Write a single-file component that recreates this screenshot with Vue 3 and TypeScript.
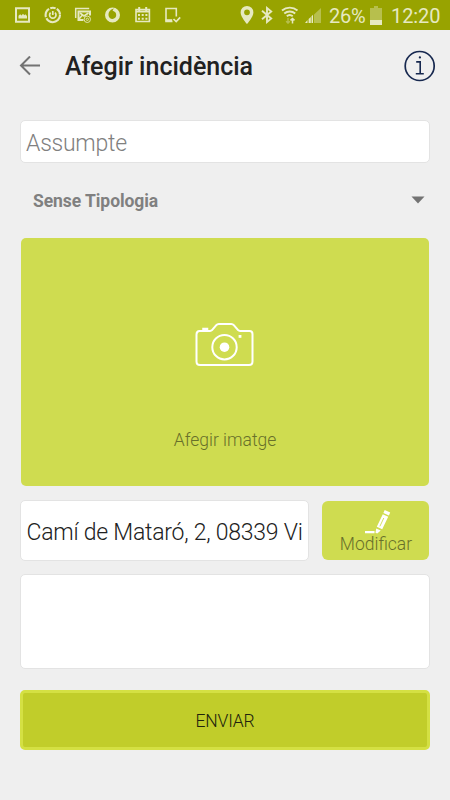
<script setup lang="ts">
import { ref } from 'vue'

const subject = ref('')
const address = ref('Camí de Mataró, 2, 08339 Vi')
const description = ref('')
const category = ref('Sense Tipologia')
const battery = '26%'
const clock = '12:20'
</script>

<template>
  <main class="screen">
    <header class="status">
      <div class="notices">
        <svg viewBox="0 0 18 18"><path d="M2 2.200h13v13.600H2z" fill="none" stroke="currentColor" stroke-width="2" /><path d="M4.500 12.500V9.800l1.700-1.600 1.300 1.300L9 7.700l1.300 1.500 1-1 1.700 1.800v2.500z" fill="currentColor" /></svg>
        <svg viewBox="0 0 18 18" fill="none" stroke="currentColor"><circle cx="8.800" cy="9" r="7.200" stroke-width="2.100" stroke-dasharray="19 1.300 9.500 1.300 5.500 1.300 6.600 1.300" /><path d="M6.600 6.700A3.200 3.200 0 1 0 11 6.700" stroke-width="1.700" /><path d="M8.800 5v4" stroke-width="1.700" /></svg>
        <svg viewBox="0 0 18 18" fill="none" stroke="currentColor"><path d="M1.700 12V2.500h13.500" stroke-width="1.500" /><path d="M9.500 14H4.500V5.500h11.500V9.500" stroke-width="2" /><path d="m6 7 4 3 4.500-3M5 13l3-3.500" stroke-width="1.600" /><circle cx="13.300" cy="13.300" r="3.200" stroke-width=".9" /><circle cx="13.300" cy="13.300" r="1.200" stroke-width=".8" /></svg>
        <svg viewBox="0 0 18 18"><path fill-rule="evenodd" d="M8.500 1.500a7.500 7.500 0 1 0 0 15 7.500 7.500 0 0 0 0-15Zm2 .9c-1.200.4-1.800 1.300-1.800 2.400 2.300.7 3.500 2.200 3.500 4.200a3.700 3.700 0 0 1-3.700 3.900 4 4 0 0 1-4-4.200c0-3 2.300-6 6-6.300Z" fill="currentColor" /></svg>
        <svg viewBox="0 0 18 18"><path d="M2 3.500h13.400v12H2z" fill="none" stroke="currentColor" stroke-width="1.600" /><path d="M2 5.500h13M5.200 1v4M12.200 1v4" stroke="currentColor" stroke-width="2" /><path d="M4 8h2v2H4zm3.700 0h2v2h-2zm3.700 0h2v2h-2zM4 11.700h2v2H4zm3.700 0h2v2h-2zm3.700 0h2v2h-2z" fill="currentColor" /></svg>
        <svg viewBox="0 0 18 18" fill="none" stroke="currentColor"><path d="M12.300 10.500v-8H2v13h6.500" stroke-width="1.600" /><path d="M1.500 14.200h6.700" stroke-width="2" /><path d="m9.500 13 2.700 2.600 4-4.200" stroke-width="1.700" /></svg>
      </div>
      <svg class="pin" viewBox="0 0 14 18"><path fill-rule="evenodd" d="M7 0a6.400 6.400 0 0 0-6.400 6.400C.6 10.700 7 18 7 18s6.400-7.300 6.400-11.600A6.400 6.400 0 0 0 7 0Zm0 3.400a2.900 2.900 0 1 1 0 5.800 2.900 2.900 0 0 1 0-5.800Z" fill="currentColor" /></svg>
      <svg class="bluetooth" viewBox="0 0 12 18"><path d="m1 4.800 9.200 7.700L6 16V2l4.200 3.500L1 13.200" fill="none" stroke="currentColor" stroke-width="1.900" /></svg>
      <svg class="wifi" viewBox="0 0 18 18" fill="none" stroke="currentColor"><path d="M1 4.500a12 12 0 0 1 15.500 0M3.300 7.500a8.200 8.200 0 0 1 10.900 0M5.800 10.300a4.500 4.500 0 0 1 5.900 0" stroke-width="1.900" /><path d="M11.500 17.500v-5M9.500 14.400l2-1.900 2 1.900" stroke-width="1.500" /><path class="dim" d="M7 12v5M5.100 15.300 7 17.100l1.900-1.800" stroke-width="1.400" /></svg>
      <svg class="signal" viewBox="0 0 16 18"><path class="dim" d="M9 8.500 16 2v15H9z" fill="currentColor" /><path d="M0 16.900 2.500 14v3H0zM3.600 13 5.800 11v6H3.600zM6.500 10.300 8 8.700V17H6.500z" fill="currentColor" /></svg>
      <span class="percent">{{ battery }}</span>
      <svg class="battery" viewBox="0 0 12 19"><path class="dim" d="M4 0h4v2h4v12H0V2h4z" fill="currentColor" /><path d="M0 14h12v5H0z" fill="currentColor" /></svg>
      <time class="clock">{{ clock }}</time>
    </header>

    <nav class="toolbar">
      <button class="back" aria-label="Enrere">
        <svg viewBox="0 0 22 20" fill="none" stroke="#737373" stroke-width="2"><path d="M21 9.500H2.500M11 .5 2 9.500l9 9" /></svg>
      </button>
      <h1>Afegir incidència</h1>
      <button class="info" aria-label="Informació">
        <svg viewBox="0 0 32 32" fill="none" stroke="#17284f"><circle cx="15.700" cy="16" r="14.500" stroke-width="1.700" /><path d="M12.200 11.900h4v11.700M11.800 23.700h8" stroke-width="1.600" /><circle cx="15.900" cy="7.400" r="1.150" fill="#17284f" stroke="none" /></svg>
      </button>
    </nav>

    <form class="form" @submit.prevent>
      <input v-model="subject" class="field subject" placeholder="Assumpte">
      <button type="button" class="category">
        <span>{{ category }}</span>
        <svg viewBox="0 0 14 8"><path d="M.5.5h13L7 7.500z" fill="#737373" /></svg>
      </button>
      <button type="button" class="photo">
        <svg viewBox="0 0 60 46" fill="none" stroke="#fff" stroke-width="2">
          <path d="M4.500 10H15q1.300 0 2-.8l4.300-5q1-1.200 2.500-1.200h12.500q1.500 0 2.500 1.200l4.300 5q.7.8 2 .8h9.400q3 0 3 3v27.500q0 3.500-3.500 3.500h-49Q1.500 44 1.500 40.500V13.500q0-3.500 3-3.500Z" />
          <path d="M8.500 9V8h3.500v1" stroke-width="2.500" />
          <circle cx="29.500" cy="26.200" r="12.200" /><circle cx="29.500" cy="26.200" r="4.800" fill="#fff" stroke="none" />
          <path d="M43.600 14h2.800v2.800h-2.800z" fill="#fff" stroke="none" />
        </svg>
        <span>Afegir imatge</span>
      </button>
      <div class="location">
        <input v-model="address" class="field address" aria-label="Adreça">
        <button type="button" class="edit">
          <svg viewBox="0 0 26 24" fill="#fff"><path d="M0 21h9.500v2.300H0zM19.700 0l5.500 2.500-1.300 3-5.500-2.500zM17.800 4.300l5.400 2.500-6 12.500-5.400-2.500zM11.200 18.400l4.600 2.200-3.600 2.900-1.700-.8z" /><path d="m18.800 8-3.900 8.300" stroke="#cfdc50" stroke-width=".9" /></svg>
          <span>Modificar</span>
        </button>
      </div>
      <textarea v-model="description" class="field description" aria-label="Descripció"></textarea>
      <button class="send">ENVIAR</button>
    </form>
  </main>
</template>

<style>
body { margin: 0; background: #efefef; }
</style>

<style scoped>
.screen { box-sizing: border-box; width: 450px; height: 800px; overflow: hidden; background: #efefef; font-family: Roboto, "Liberation Sans", sans-serif; }
.screen * { box-sizing: border-box; }
svg { display: block; flex: none; }
button { margin: 0; padding: 0; border: 0; background: none; font: inherit; color: inherit; }
.status { display: flex; align-items: center; height: 30px; padding-left: 14px; background: #98a300; color: #e6e9c0; font-size: 20px; line-height: 30px; }
.notices { display: flex; gap: 12px; width: 226px; }
.notices svg { width: 18px; height: 18px; }
.dim { opacity: .4; }
.pin { width: 14px; height: 18px; }
.bluetooth { width: 12px; height: 18px; margin-left: 7px; }
.wifi { width: 18px; height: 18px; margin-left: 8px; }
.signal { width: 16px; height: 18px; margin-left: 6px; }
.percent { width: 41px; margin-left: 8px; padding-top: 2px; letter-spacing: -.3px; }
.battery { width: 12px; height: 19px; }
.clock { margin-left: 9px; padding-top: 2px; letter-spacing: -.1px; }
.toolbar { display: flex; align-items: center; height: 71px; padding: 0 14px 0 19px; }
.back svg { width: 22px; height: 20px; }
.toolbar h1 { flex: 1; margin: 0 0 0 24px; padding-top: 3px; color: #212121; font-size: 25px; font-weight: 500; line-height: 34px; white-space: nowrap; }
.info svg { width: 32px; height: 32px; }
.form { display: flex; flex-direction: column; padding: 19px 20px 0; }
.field { display: block; margin: 0; border: 1px solid #e3e3e3; border-radius: 5px; outline: 0; background: #fff; color: #212121; font-family: inherit; font-weight: 300; }
.subject { width: 100%; height: 43px; padding: 3px 5px 0; font-size: 23px; letter-spacing: -.25px; }
.subject::placeholder { color: #808080; opacity: 1; }
.category { display: flex; align-items: center; justify-content: space-between; height: 75px; padding: 0 5px 0 13px; color: #808080; font-size: 17.500px; font-weight: 700; letter-spacing: -.06px; }
.category svg { width: 14px; height: 8px; margin-bottom: 1px; }
.photo { display: flex; flex-direction: column; align-items: center; height: 248px; margin: 0 1px; padding-top: 83px; border-radius: 5px; background: #cfdc50; color: #68702a; font-size: 17.500px; font-weight: 300; }
.photo svg { width: 60px; height: 46px; }
.photo span { margin-top: 62px; line-height: 22px; }
.location { display: flex; gap: 13px; height: 61px; margin-top: 14px; }
.address { width: 289px; height: 61px; padding: 3px 4px 0 5.500px; font-size: 23px; letter-spacing: -.24px; }
.edit { display: flex; flex-direction: column; align-items: center; width: 107px; height: 59px; margin-top: 1px; padding: 9px 0 0 1px; border-radius: 6px; background: #cfdc50; color: #68702a; font-size: 17.500px; font-weight: 300; }
.edit svg { width: 26px; height: 24px; margin-left: 3px; }
.edit span { margin-top: -1px; line-height: 22px; }
.description { width: 100%; height: 95px; margin-top: 13px; resize: none; }
.send { height: 60px; margin-top: 20.500px; padding-top: 2px; border: 3px solid #d4e043; border-radius: 5px; background: #c1cd2a; color: #20230d; font-size: 17.500px; font-weight: 300; letter-spacing: -.15px; }
</style>
